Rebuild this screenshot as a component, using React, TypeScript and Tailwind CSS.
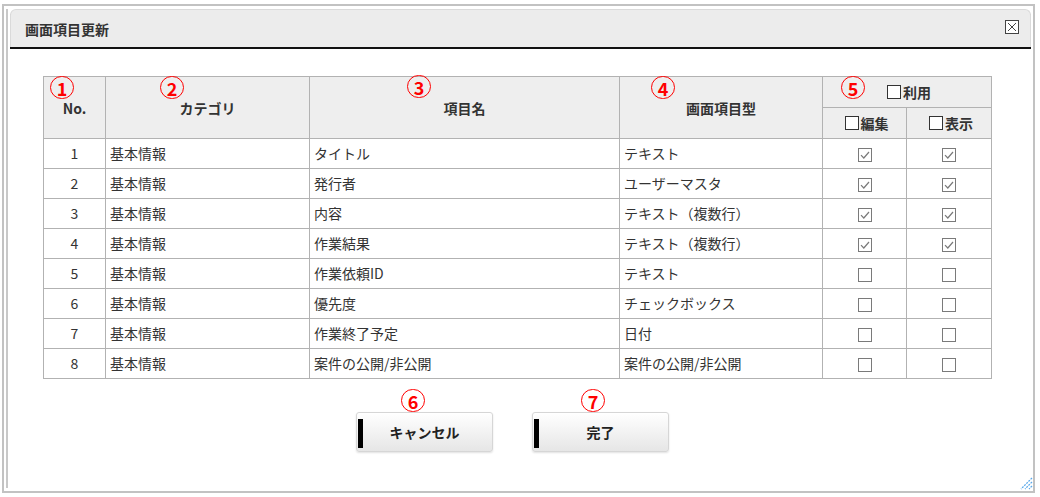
import React from 'react'

const rows: [string, string, string, string, boolean, boolean][] = [
  ['1', '基本情報', 'タイトル', 'テキスト', true, true],
  ['2', '基本情報', '発行者', 'ユーザーマスタ', true, true],
  ['3', '基本情報', '内容', 'テキスト（複数行）', true, true],
  ['4', '基本情報', '作業結果', 'テキスト（複数行）', true, true],
  ['5', '基本情報', '作業依頼ID', 'テキスト', false, false],
  ['6', '基本情報', '優先度', 'チェックボックス', false, false],
  ['7', '基本情報', '作業終了予定', '日付', false, false],
  ['8', '基本情報', '案件の公開/非公開', '案件の公開/非公開', false, false],
]

function CheckBox({ checked }: { checked: boolean }) {
  return (
    <svg width="14" height="14" viewBox="0 0 14 14" className="inline-block align-middle">
      <rect x="0.5" y="0.5" width="13" height="13" fill="white" stroke="#7a7a7a" />
      {checked && <path d="M3 7.2 L5.8 10 L11 4" fill="none" stroke="#7a7a7a" strokeWidth="1.2" />}
    </svg>
  )
}

function HeadBox({ label }: { label: string }) {
  return (
    <span className="inline-flex items-center gap-[2px]">
      <span className="inline-block w-[14px] h-[14px] border border-[#333] bg-white" />
      <span>{label}</span>
    </span>
  )
}

function Marker({ n, className }: { n: string; className: string }) {
  return (
    <div
      className={`absolute w-[24px] h-[23px] rounded-full border border-[#ff0000] flex items-center justify-center text-[#ff0000] font-bold text-[18px] leading-none ${className}`}
    >
      {n}
    </div>
  )
}

function Button({ label }: { label: string }) {
  return (
    <div className="relative w-[137px] h-[40px] rounded-[3px] border border-[#d6d6d6] bg-gradient-to-b from-white to-[#e6e6e6] shadow-[0_1px_2px_rgba(0,0,0,0.12)] flex items-center justify-center">
      <span className="absolute left-[1px] top-[6px] w-[5px] h-[29px] bg-black" />
      <span className="text-[14px] font-bold text-[#222]">{label}</span>
    </div>
  )
}

export default function App() {
  return (
    <div
      className="relative w-[1040px] h-[497px] bg-white overflow-hidden text-[#333]"
      style={{ fontFamily: '"Noto Sans CJK JP", "Noto Sans", sans-serif' }}
    >
      {/* window frame */}
      <div className="ml-[2px] mt-[4px] w-[1033px] h-[489px] border-2 border-[#c2c2c2]">
        <div className="ml-[2px] mt-[2px] h-[479px] border-l-2 border-[#c8c8c8]">
          {/* title bar */}
          <div className="ml-[2px] mt-[3px] mr-[2px] h-[38px] flex items-center justify-between rounded-t-[6px] border border-b-0 border-[#dadada] bg-[#ececec] shadow-[0_2px_0_0_#111]">
            <span className="pl-[14px] pt-[2px] text-[14px] font-bold text-[#333]">画面項目更新</span>
            <span className="mr-[11px] mb-[3px] w-[14px] h-[14px] border border-[#444] bg-white flex items-center justify-center">
              <svg width="10" height="10" viewBox="0 0 10 10">
                <path d="M1 1 L9 9 M9 1 L1 9" stroke="#444" strokeWidth="1" />
              </svg>
            </span>
          </div>

          {/* table */}
          <div className="pl-[35px] pt-[29px]">
            <table className="table-fixed border-collapse w-[948px] text-[14px]">
              <colgroup>
                <col className="w-[62px]" />
                <col className="w-[204px]" />
                <col className="w-[310px]" />
                <col className="w-[203px]" />
                <col className="w-[84px]" />
                <col className="w-[85px]" />
              </colgroup>
              <thead>
                <tr className="h-[31px] bg-[#eeeeee] text-[#333]">
                  <th rowSpan={2} className="border border-[#b2b2b2] pt-[2px] font-bold">No.</th>
                  <th rowSpan={2} className="border border-[#b2b2b2] pt-[2px] font-bold">カテゴリ</th>
                  <th rowSpan={2} className="border border-[#b2b2b2] pt-[2px] font-bold">項目名</th>
                  <th rowSpan={2} className="border border-[#b2b2b2] pt-[2px] font-bold">画面項目型</th>
                  <th colSpan={2} className="border border-[#b2b2b2] pl-[4px] pt-[2px] font-bold">
                    <HeadBox label="利用" />
                  </th>
                </tr>
                <tr className="h-[31px] bg-[#eeeeee]">
                  <th className="border border-[#b2b2b2] pt-[2px] pl-[4px] font-bold">
                    <HeadBox label="編集" />
                  </th>
                  <th className="border border-[#b2b2b2] pt-[2px] pl-[4px] font-bold">
                    <HeadBox label="表示" />
                  </th>
                </tr>
              </thead>
              <tbody>
                {rows.map(([no, cat, name, type, edit, show]) => (
                  <tr key={no} className="h-[30px]">
                    <td className="border border-[#b2b2b2] text-center">{no}</td>
                    <td className="border border-[#b2b2b2] pl-[4px]">{cat}</td>
                    <td className="border border-[#b2b2b2] pl-[4px]">{name}</td>
                    <td className="border border-[#b2b2b2] pl-[4px]">{type}</td>
                    <td className="border border-[#b2b2b2] text-center">
                      <CheckBox checked={edit} />
                    </td>
                    <td className="border border-[#b2b2b2] text-center">
                      <CheckBox checked={show} />
                    </td>
                  </tr>
                ))}
              </tbody>
            </table>
          </div>

          {/* buttons */}
          <div className="flex gap-[39px] pl-[348px] pt-[33px]">
            <Button label="キャンセル" />
            <Button label="完了" />
          </div>
        </div>
      </div>

      {/* resize grip */}
      <svg className="absolute left-[1019px] top-[476px]" width="14" height="14" viewBox="0 0 14 14">
        <path d="M13 2 L2 13 M13 6 L6 13 M13 10 L10 13" stroke="#5aa9ea" strokeWidth="1.3" strokeDasharray="2 1" />
      </svg>

      {/* annotation markers */}
      <Marker n="1" className="left-[50px] top-[76px]" />
      <Marker n="2" className="left-[160px] top-[76px]" />
      <Marker n="3" className="left-[407px] top-[75px]" />
      <Marker n="4" className="left-[651px] top-[76px]" />
      <Marker n="5" className="left-[841px] top-[76px]" />
      <Marker n="6" className="left-[401px] top-[389px]" />
      <Marker n="7" className="left-[581px] top-[389px]" />
    </div>
  )
}
